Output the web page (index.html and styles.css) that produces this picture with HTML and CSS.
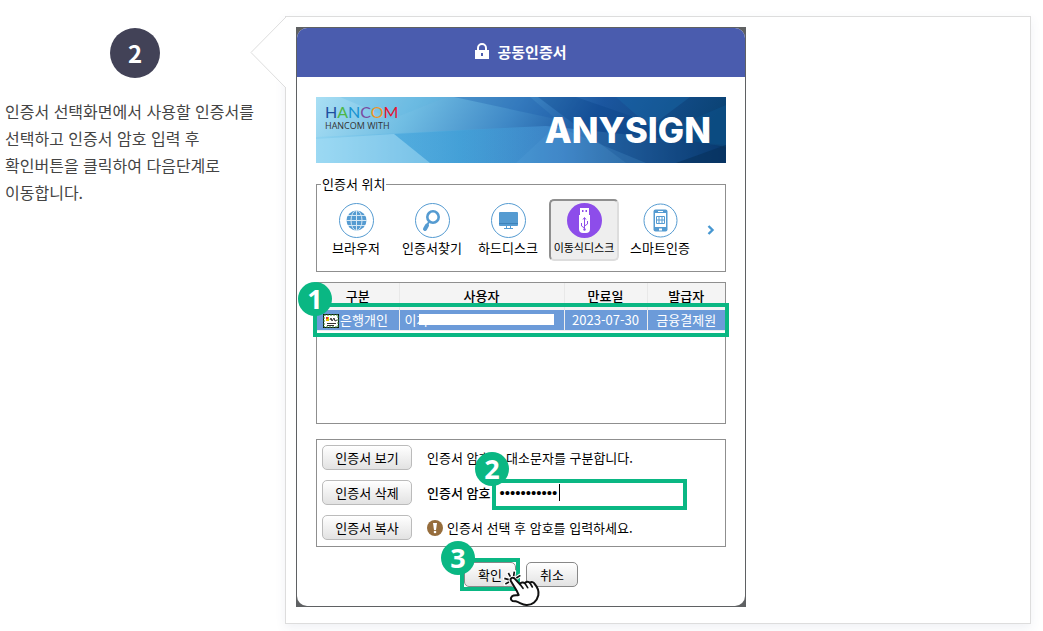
FILE: index.html
```html
<!DOCTYPE html>
<html lang="ko">
<head>
    <meta charset="UTF-8">
    <title>공동인증서 이용안내</title>
    <link rel="stylesheet" href="styles.css">
</head>
<body>
    <div class="step">
        <div class="step-info">
            <strong class="step-num">2</strong>
            <p>인증서 선택화면에서 사용할 인증서를 선택하고 인증서 암호 입력 후 확인버튼을 클릭하여 다음단계로 이동합니다.</p>
        </div>
        <div class="step-view">
            <svg class="step-arrow" width="37" height="74" viewBox="0 0 37 74">
                <path d="M36 1 L1 36.500 L36 72" fill="#fff" stroke="#ddd"/>
            </svg>
            <div class="dialog">
                <div class="dialog-inner">
                    <h2 class="dialog-title">
                        <svg width="14" height="17" viewBox="0 0 14 17">
                            <path d="M3 8V5a4 4 0 0 1 8 0v3" fill="none" stroke="#fff" stroke-width="2"/>
                            <path d="M0 7h14v9H0z" fill="#fff"/>
                            <path d="M6 10h2v3H6z" fill="#4a5cae"/>
                        </svg>
                        공동인증서
                    </h2>
                    <div class="dialog-body">
                        <div class="banner">
                            <svg class="banner-bg" viewBox="0 0 410 66" preserveAspectRatio="none">
                                <defs>
                                    <linearGradient id="sky" x1="0" x2="1" y1="0" y2="0.100">
                                        <stop offset="0" stop-color="#a9dff4"/>
                                        <stop offset="0.250" stop-color="#70bde3"/>
                                        <stop offset="0.500" stop-color="#3f88c6"/>
                                        <stop offset="0.700" stop-color="#1b569f"/>
                                        <stop offset="1" stop-color="#0b4375"/>
                                    </linearGradient>
                                    <linearGradient id="low" x1="0" x2="1" y1="0" y2="0">
                                        <stop offset="0" stop-color="#8fd3f0"/>
                                        <stop offset="0.350" stop-color="#4aa5d9"/>
                                        <stop offset="0.600" stop-color="#3a80c4"/>
                                        <stop offset="1" stop-color="#0a3766"/>
                                    </linearGradient>
                                    <linearGradient id="shade" x1="0" x2="1" y1="0" y2="0">
                                        <stop offset="0" stop-color="#2f9ad8"/>
                                        <stop offset="1" stop-color="#2f7fc8" stop-opacity="0"/>
                                    </linearGradient>
                                </defs>
                                <path d="M0 0H410V66H0z" fill="url(#sky)"/>
                                <path d="M0 40L230 29L410 48V66H0z" fill="url(#low)"/>
                                <path d="M78 37L230 29L200 66H114z" fill="url(#shade)" opacity="0.400"/>
                                <path d="M0 42L78 37L114 66H0z" fill="#b5e6f8" opacity="0.350"/>
                                <path d="M24 0H130L76 22z" fill="#5bb2de" opacity="0.250"/>
                                <path d="M138 0L240 22L214 0z" fill="#1c5ba8" opacity="0.300"/>
                                <path d="M222 0L310 66H410V52L260 0z" fill="#083e83" opacity="0.300"/>
                                <path d="M240 29L330 66H200z" fill="#5ba4de" opacity="0.200"/>
                                <path d="M300 0H374L334 30z" fill="#1a6cab" opacity="0.400"/>
                                <path d="M410 8L340 38L410 50z" fill="#0c5793" opacity="0.400"/>
                                <path d="M410 48L360 66H410z" fill="#052e55" opacity="0.500"/>
                            </svg>
                            <div class="maker">
                                <b class="maker-logo"><i class="c1">H</i><i class="c2">A</i><i class="c3">N</i><i class="c4">C</i><i class="c5">O</i><i class="c6">M</i></b>
                                <span>HANCOM WITH</span>
                            </div>
                            <strong class="product">ANYSIGN</strong>
                        </div>

                        <fieldset class="places">
                            <legend>인증서 위치</legend>
                            <div class="place-list">
                                <button type="button" class="place">
                                    <svg viewBox="0 0 35 35">
                                        <circle cx="17.500" cy="17.500" r="17" fill="#fff" stroke="#559bd1"/>
                                        <circle cx="17.500" cy="17.500" r="10" fill="#559bd1"/>
                                        <path d="M17.500 7v21M7 17.500h21M9 12.500h17M9 22.500h17" stroke="#d5e8f5" fill="none"/>
                                        <ellipse cx="17.500" cy="17.500" rx="5.500" ry="10" stroke="#d5e8f5" fill="none"/>
                                    </svg>
                                    브라우저
                                </button>
                                <button type="button" class="place">
                                    <svg viewBox="0 0 35 35">
                                        <circle cx="17.500" cy="17.500" r="17" fill="#fff" stroke="#559bd1"/>
                                        <circle cx="18" cy="14" r="5.700" fill="#fff" stroke="#559bd1" stroke-width="2.600"/>
                                        <path d="M14 19l-2 3" stroke="#559bd1" stroke-width="2"/>
                                        <path d="M12 22.500l-2 3.500" stroke="#559bd1" stroke-width="4" stroke-linecap="round"/>
                                    </svg>
                                    인증서찾기
                                </button>
                                <button type="button" class="place">
                                    <svg viewBox="0 0 35 35">
                                        <circle cx="17.500" cy="17.500" r="17" fill="#fff" stroke="#559bd1"/>
                                        <rect x="8" y="9" width="19" height="14" rx="1" fill="#559bd1"/>
                                        <path d="M8 20.500h19" stroke="#3e83ba"/>
                                        <path d="M15.500 23v2M19.500 23v2M13 25.500h9" stroke="#559bd1" fill="none"/>
                                    </svg>
                                    하드디스크
                                </button>
                                <button type="button" class="place on">
                                    <svg viewBox="0 0 35 35">
                                        <circle cx="17.500" cy="17.500" r="17.500" fill="#8d4dea"/>
                                        <rect x="13" y="5" width="9" height="7" fill="#fff"/>
                                        <path d="M15 8h1.500M18.500 8H20" stroke="#8d4dea" stroke-width="2"/>
                                        <path d="M12 12h11v14q0 4-4 4h-3q-4 0-4-4z" fill="#fff"/>
                                        <path d="M17.500 15v12M17.500 25l-3-2v-3M17.500 23l3-2v-3M16 16.500l1.500-2 1.500 2" stroke="#8d4dea" fill="none"/>
                                        <circle cx="17.500" cy="26.500" r="1.200" fill="#8d4dea"/>
                                    </svg>
                                    이동식디스크
                                </button>
                                <button type="button" class="place">
                                    <svg viewBox="0 0 35 35">
                                        <circle cx="17.500" cy="17.500" r="16.500" fill="#fff" stroke="#559bd1"/>
                                        <rect x="10.500" y="6.500" width="14" height="22" rx="2" fill="#559bd1"/>
                                        <path d="M12 10h11v14H12z" fill="#fff"/>
                                        <path d="M15 8.500h5" stroke="#fff"/>
                                        <rect x="16" y="25.500" width="3" height="2" fill="#fff"/>
                                        <path d="M13.500 13.500h8v7h-8zM16 13.500v7M19 13.500v7M13.500 17h8" stroke="#559bd1" fill="none"/>
                                    </svg>
                                    스마트인증
                                </button>
                                <button type="button" class="place-next" aria-label="다음">
                                    <svg width="8" height="10" viewBox="0 0 8 10">
                                        <path d="M1.500 1l4 4-4 4" fill="none" stroke="#4797d1" stroke-width="2.400"/>
                                    </svg>
                                </button>
                            </div>
                        </fieldset>

                        <div class="certs">
                            <table>
                                <thead>
                                    <tr>
                                        <th class="col-kind">구분</th>
                                        <th>사용자</th>
                                        <th class="col-date">만료일</th>
                                        <th class="col-issuer">발급자</th>
                                    </tr>
                                </thead>
                                <tbody>
                                    <tr>
                                        <td class="kind">
                                            <svg width="16" height="14" viewBox="0 0 16 14">
                                                <path d="M0 0h16v14H0z" fill="#111"/>
                                                <path d="M1 1h14v12H1z" fill="#fff" stroke="#2e8b35" stroke-dasharray="2 1"/>
                                                <path d="M3 3h3v4H3z" fill="#e3c400"/>
                                                <path d="M3 3h2v2H3z" fill="#d33"/>
                                                <path d="M7 6l1-2 1 3 2-3 1 3 2-1M4 9.500h9M4 11.500h7" fill="none" stroke="#333"/>
                                            </svg>은행개인
                                        </td>
                                        <td class="user">이차<span class="mask"></span></td>
                                        <td>2023-07-30</td>
                                        <td>금융결제원</td>
                                    </tr>
                                </tbody>
                            </table>
                            <span class="mark mark-row"></span>
                            <b class="dot dot-1">1</b>
                        </div>

                        <div class="manage">
                            <button type="button" class="btn">인증서 보기</button>
                            <p>인증서 암호는 대소문자를 구분합니다.</p>
                            <button type="button" class="btn">인증서 삭제</button>
                            <div class="pw">
                                <label for="pw">인증서 암호</label>
                                <input type="password" id="pw" value="12345678901">
                                <span class="mark mark-pw"></span>
                                <span class="caret"></span>
                            </div>
                            <button type="button" class="btn">인증서 복사</button>
                            <p class="notice">
                                <svg width="16" height="16" viewBox="0 0 16 16">
                                    <circle cx="8" cy="8" r="8" fill="#966d3c"/>
                                    <path d="M6 3h4L9 10H7z" fill="#fff"/>
                                    <circle cx="8" cy="12" r="1.300" fill="#fff"/>
                                </svg>
                                인증서 선택 후 암호를 입력하세요.
                            </p>
                            <b class="dot dot-2">2</b>
                        </div>

                        <div class="actions">
                            <span class="ok">
                                <button type="button" class="btn btn-s">확인</button>
                                <span class="mark mark-ok"></span>
                                <b class="dot dot-3">3</b>
                                <svg class="hand" width="40" height="37" viewBox="0 0 120 111">
                                    <g fill="none" stroke="#fff" stroke-width="11" stroke-linecap="round">
                                        <path d="M16 9l6 11M34 5l-2 13M52 16l-12 8M4 25l13 4M7 42l11-6"/>
                                    </g>
                                    <g fill="none" stroke="#111" stroke-width="5">
                                        <path d="M16 9l6 11M34 5l-2 13M52 16l-12 8M4 25l13 4M7 42l11-6"/>
                                    </g>
                                    <path d="M23 32C21 24 30 20 35 26L51 43C53 37 61 36 66 40C69 34 77 34 81 39C85 34 92 36 95 42C104 52 108 65 106 76C102 94 88 106 70 105C57 104 50 97 38 94C25 95 20 87 27 79C33 74 41 77 47 75L42 64z" fill="#fff" stroke="#111" stroke-width="6" stroke-linejoin="round"/>
                                    <path d="M51 43l9 12M66 40l8 13M81 39l7 12" fill="none" stroke="#111" stroke-width="5" stroke-linecap="round"/>
                                </svg>
                            </span>
                            <button type="button" class="btn btn-s">취소</button>
                        </div>
                    </div>
                </div>
            </div>
        </div>
    </div>
</body>
</html>
```
FILE: styles.css
```css
* {
    margin: 0;
    padding: 0;
    box-sizing: border-box;
}

body {
    background: #fff;
    font-family: 'Noto Sans CJK KR', sans-serif;
    font-size: 13px;
    color: #000;
}

button,
input {
    font-family: inherit;
    font-size: 13px;
    color: #000;
}

svg {
    display: block;
    flex: none;
}

.step {
    display: grid;
    grid-template-columns: 270px 1fr;
    gap: 15px;
    padding: 16px 12px 7px 0;
}

/* 왼쪽 설명 */
.step-info {
    padding: 12px 15px 0 5px;
}

.step-num {
    display: block;
    width: 50px;
    height: 50px;
    margin: 0 auto 20px 105px;
    border-radius: 50%;
    background: #424257;
    color: #fff;
    font-size: 24px;
    font-weight: 700;
    line-height: 50px;
    text-align: center;
}

.step-info p {
    font-size: 16px;
    line-height: 27px;
    color: #444;
    word-break: keep-all;
}

/* 오른쪽 화면 */
.step-view {
    position: relative;
    padding: 10px;
    border: 1px solid #ddd;
    background: #fff;
    box-shadow: 0 4px 10px rgba(60, 80, 130, .08);
}

.step-arrow {
    position: absolute;
    left: -36px;
    top: -1px;
}

.dialog {
    max-width: 450px;
    margin-bottom: 6px;
    border: 1px solid #5f6163;
    background: #5f6163;
}

.dialog-inner {
    border-radius: 10px;
    background: #fff;
}

.dialog-title {
    display: flex;
    align-items: center;
    justify-content: center;
    gap: 8px;
    height: 49px;
    padding-bottom: 2px;
    border-radius: 10px 10px 0 0;
    background: #4a5cae;
    color: #fff;
    font-size: 15px;
    font-weight: 700;
}

.dialog-body {
    padding: 20px 19px 19px;
}

.banner {
    position: relative;
    display: flex;
    align-items: center;
    justify-content: space-between;
    height: 66px;
    padding: 0 15px 0 9px;
    margin-bottom: 11px;
}

.banner-bg {
    position: absolute;
    left: 0;
    top: 0;
    width: 100%;
    height: 100%;
}

.maker,
.product {
    position: relative;
}

.maker {
    align-self: flex-start;
    padding-top: 7px;
    font-family: 'Open Sans', sans-serif;
    font-size: 9px;
    line-height: 12px;
    color: #333;
}

.maker-logo {
    display: block;
    font-family: Lato, sans-serif;
    font-size: 16px;
    line-height: 16px;
    font-weight: normal;
}

.maker-logo i {
    font-style: normal;
}

.c1 { color: #1f4fa0; }
.c2 { color: #4db748; }
.c3 { color: #1793d1; }
.c4 { color: #7a4ba0; }
.c5 { color: #ef9425; }
.c6 { color: #e60f2d; }

.product {
    font-family: Inter, sans-serif;
    font-size: 35px;
    font-weight: 800;
    color: #fff;
}

/* 인증서 위치 */
.places {
    height: 98px;
    padding: 0 4px;
    border: 1px solid #8f8f8f;
}

.places legend {
    padding: 0 1px;
    line-height: 20px;
}

.place-list {
    display: flex;
    align-items: center;
    gap: 6px;
    padding-top: 5px;
}

.place {
    display: flex;
    flex-direction: column;
    align-items: center;
    width: 70px;
    height: 62px;
    padding-top: 2px;
    border: 2px solid transparent;
    border-radius: 5px;
    background: none;
    line-height: 19px;
    white-space: nowrap;
}

.place svg {
    width: 35px;
    height: 35px;
}

.place.on {
    border-color: #8f8f8f #ddd #ddd #8f8f8f;
    background: #eee;
    font-size: 11px;
}

.place-next {
    padding: 4px 6px;
    border: 0;
    background: none;
}

/* 인증서 목록 */
.certs {
    position: relative;
    height: 142px;
    margin: 10px 0 15px;
    border: 1px solid #8f8f8f;
}

.certs table {
    width: 100%;
    border-collapse: collapse;
    table-layout: fixed;
}

.certs th {
    height: 27px;
    padding-bottom: 2px;
    border-right: 1px solid #e8e8e8;
    background: #f4f4f4;
    font-weight: 500;
    line-height: 20px;
}

.certs td {
    height: 20px;
    border-right: 1px solid #eee;
    border-bottom: 1px solid #eee;
    background: #6c9bd9;
    color: #fff;
    line-height: 18px;
    text-align: center;
    white-space: nowrap;
}

.certs th:last-child,
.certs td:last-child {
    border-right: 0;
}

.certs .col-kind {
    width: 82px;
}

.certs .col-date {
    width: 83px;
}

.certs .col-issuer {
    width: 78px;
}

.certs .kind {
    padding-left: 6px;
    text-align: left;
}

.certs .kind svg {
    display: inline-block;
    margin-right: 1px;
    vertical-align: middle;
}

.certs .user {
    position: relative;
    padding-left: 5px;
    text-align: left;
}

.mask {
    position: absolute;
    left: 19px;
    right: 10px;
    top: 4px;
    height: 11px;
    background: #fff;
}

/* 암호 입력 */
.manage {
    position: relative;
    display: grid;
    grid-template-columns: 90px 1fr;
    grid-auto-rows: 25px;
    align-items: center;
    gap: 10px 15px;
    padding: 5px 5px 6px;
    border: 1px solid #8f8f8f;
}

.btn {
    height: 25px;
    border: 1px solid #bbb;
    border-radius: 5px;
    background: linear-gradient(#fff, #e2e2e2);
    line-height: 20px;
}

.pw {
    position: relative;
    display: flex;
    align-items: center;
    gap: 9px;
}

.pw label {
    font-weight: 500;
}

.pw input {
    width: 180px;
    height: 20px;
    border: 0;
    background: none;
    font-family: 'Liberation Sans', sans-serif;
    font-size: 15px;
    outline: none;
}

.caret {
    position: absolute;
    left: 132px;
    top: 1px;
    width: 1px;
    height: 17px;
    background: #000;
}

.notice {
    display: flex;
    align-items: center;
    gap: 4px;
}

.actions {
    display: flex;
    justify-content: center;
    gap: 10px;
    margin-top: 15px;
}

.btn-s {
    width: 52px;
    border-color: #888;
}

.ok {
    position: relative;
}

/* 강조 표시 */
.mark {
    position: absolute;
    border: 4px solid #0ab783;
    pointer-events: none;
}

.mark-row {
    left: -4px;
    right: -4px;
    top: 20px;
    height: 34px;
}

.mark-pw {
    left: 65px;
    top: -4px;
    width: 195px;
    height: 31px;
}

.mark-ok {
    left: -4px;
    top: -4px;
    width: 60px;
    height: 33px;
}

.dot {
    position: absolute;
    width: 34px;
    height: 34px;
    border-radius: 50%;
    background: #0ab783;
    color: #fff;
    font-family: 'Noto Sans', sans-serif;
    font-size: 27px;
    line-height: 34px;
    text-align: center;
}

.dot-1 {
    left: -19px;
    top: -1px;
}

.dot-2 {
    left: 158px;
    top: 12px;
}

.dot-3 {
    left: -23px;
    top: -21px;
}

.hand {
    position: absolute;
    left: 39px;
    top: 8px;
}
```
